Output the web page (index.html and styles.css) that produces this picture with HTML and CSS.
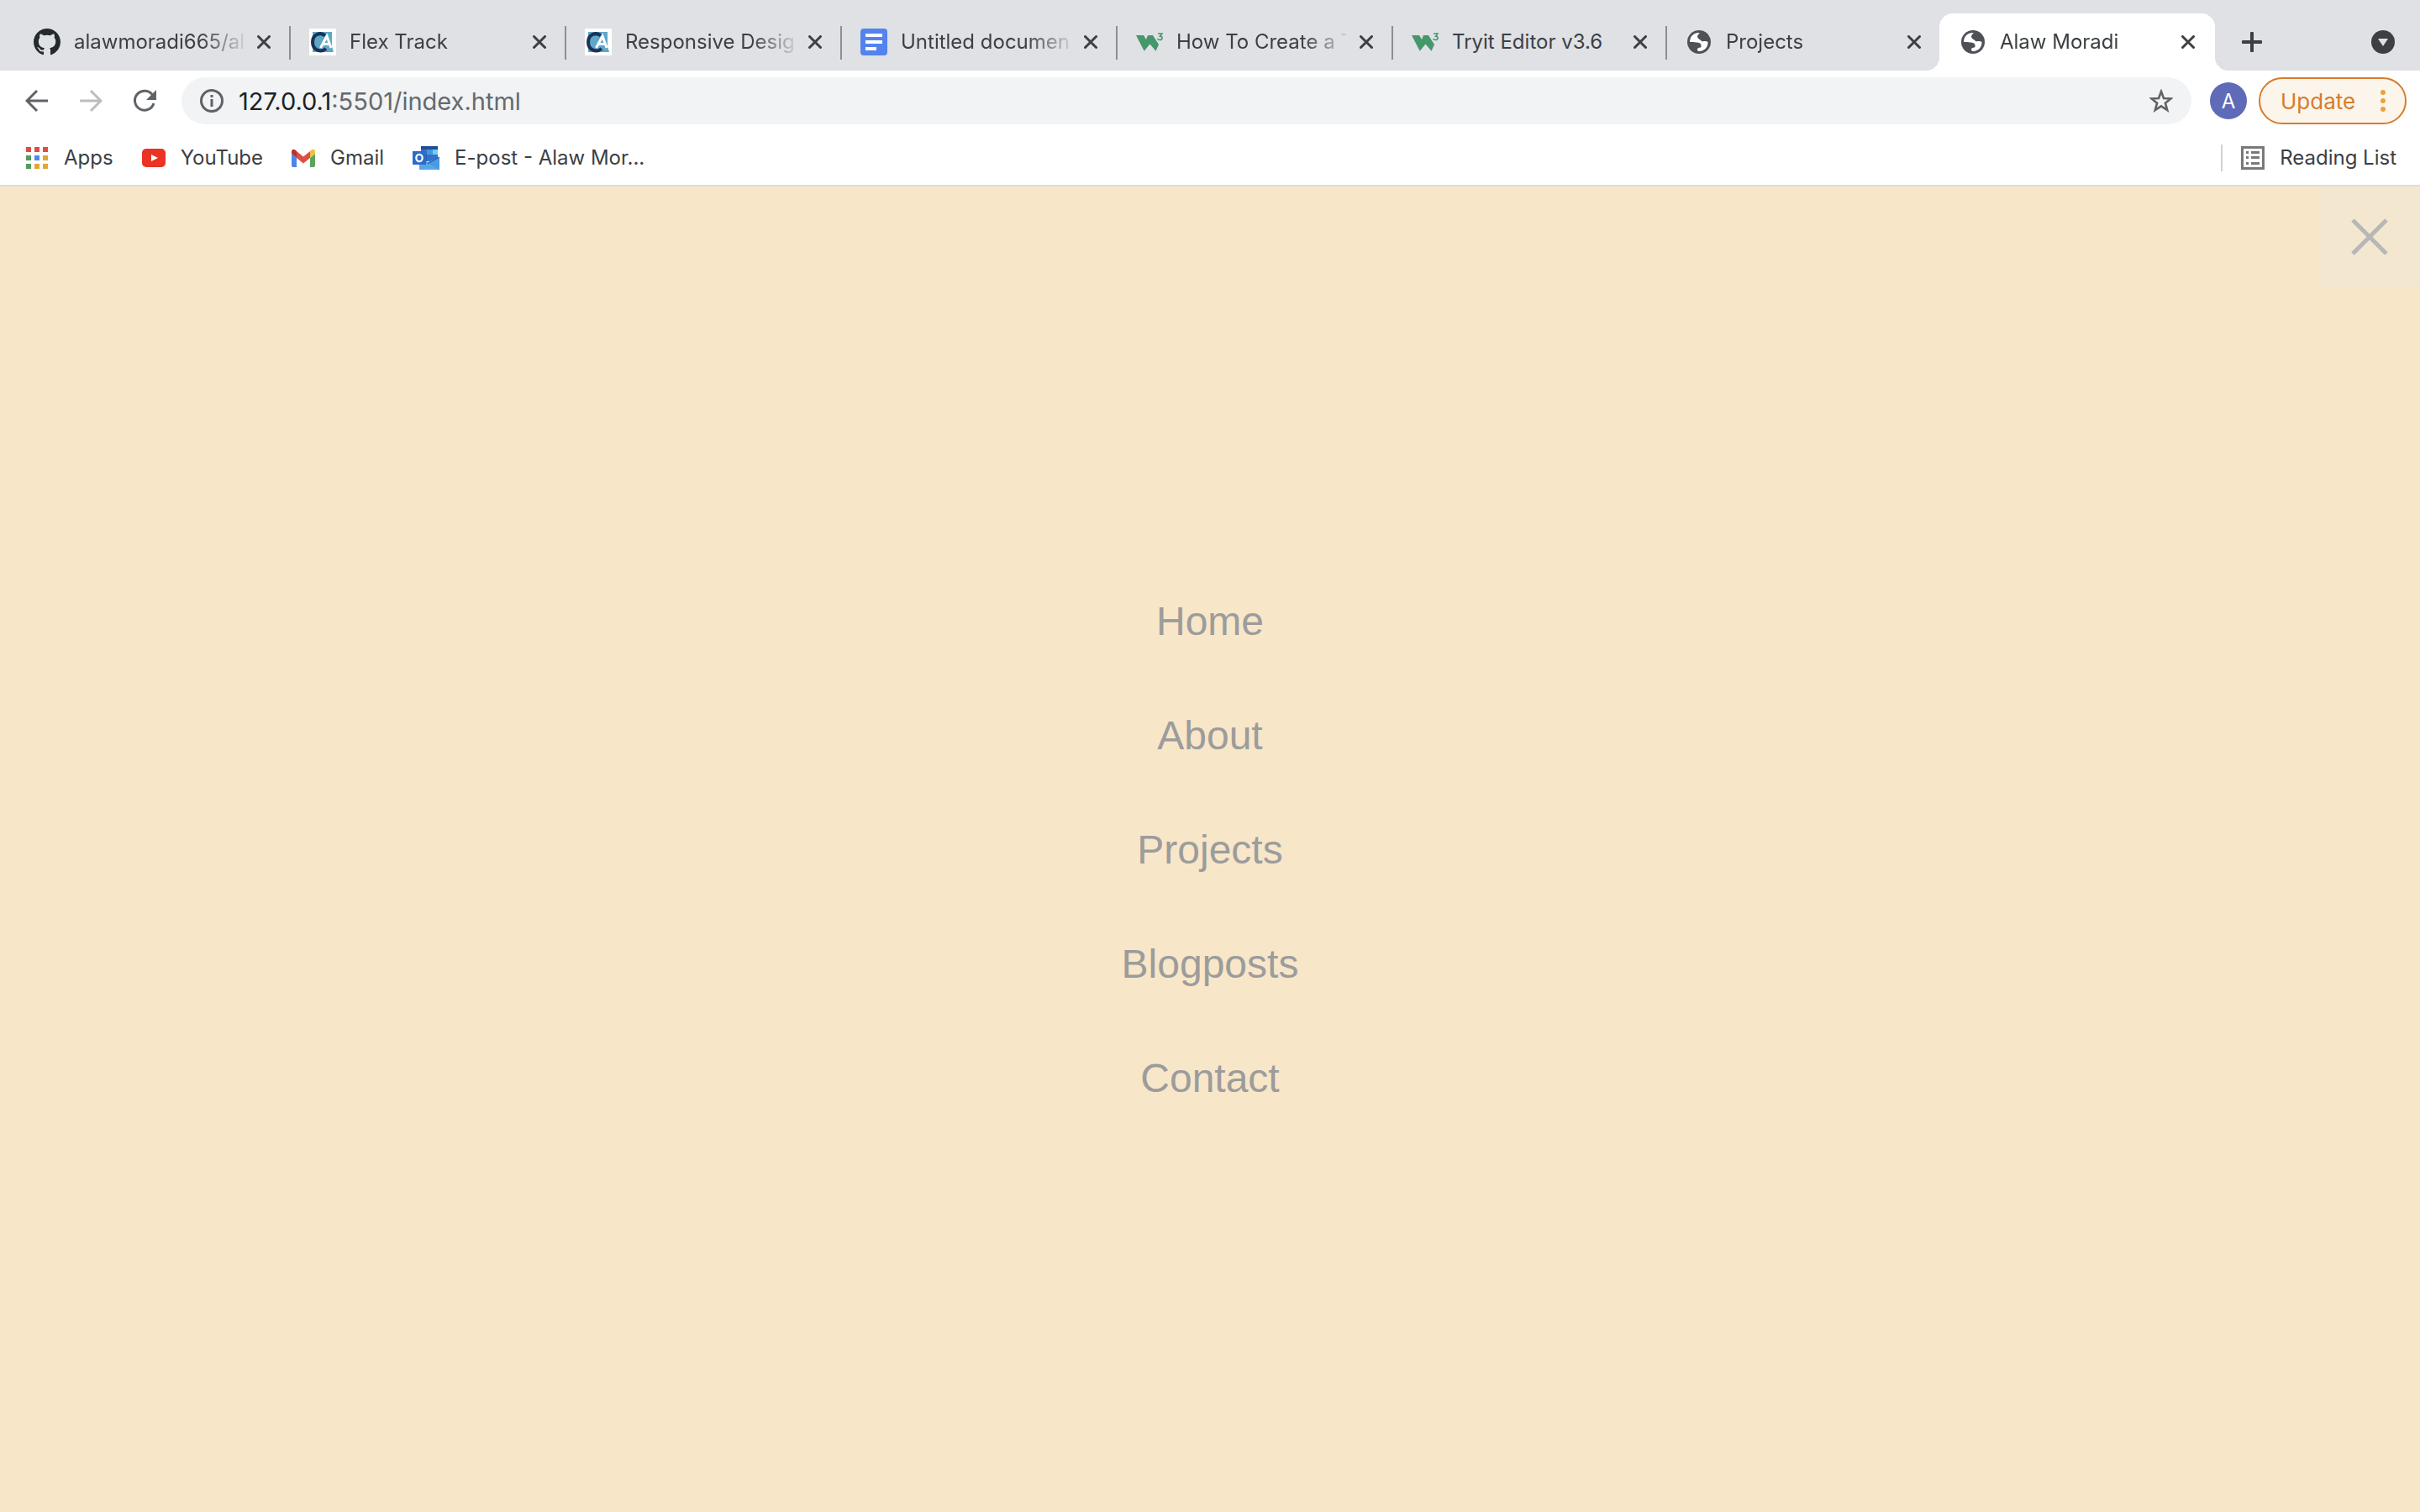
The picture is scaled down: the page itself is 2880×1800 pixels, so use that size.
FILE: index.html
```html
<!DOCTYPE html>
<html lang="en">
<head>
<meta charset="utf-8">
<title>Alaw Moradi</title>
<link rel="stylesheet" href="styles.css">
</head>
<body>
<svg class="defs" aria-hidden="true">
  <symbol id="close" viewBox="0 0 16 16"><path d="M1.5 1.5l13 13M14.5 1.5l-13 13" fill="none" stroke="#3c4043" stroke-width="3" stroke-linecap="round"/></symbol>
  <symbol id="globe" viewBox="0 0 32 32"><circle cx="16" cy="16" r="14" fill="#505157"/><path d="M5 16C5 9 10 4.500 17 5C15 7 14 8 14 10C15 13 18 13 19 15C21 16 24 14 26.500 16C27 22 22 27.500 15.500 27C13 26 14 24 15 23C18 23 19 22 18.500 20C18 17 16 17 13 16.500C10 16 8 16 5 16Z" fill="#fff" class="land"/></symbol>
  <symbol id="academy" viewBox="0 0 32 32"><path fill="#fff" d="M0 0h32v32H0z"/><path fill="#5ea7c6" d="M4 4h23v17l2 7H4z"/><path d="M19 8.500C14 4 4 6 4 16S14 29 20 24" fill="none" stroke="#1c3257" stroke-width="4"/><path d="M13.500 23L21 9l5 14M17 18.500h7" fill="none" stroke="#fff" stroke-width="3"/></symbol>
  <symbol id="w3" viewBox="0 0 32 32"><path d="M0 8h9l3 5 2-5h6l7 11-3.500 7.700L16.500 18.500 9.700 26.700z" fill="#44986a"/><path d="M26 6h5l-2.500 3.200c4 0 3 4.300 0 4.300-1.500 0-2.500-.5-3-1.500" fill="none" stroke="#44986a" stroke-width="1.500"/></symbol>
</svg>
<header class="browser">
  <nav class="tabs" aria-label="Tabs">
    <div class="tab">
      <svg class="favicon" viewBox="0 0 16 16"><path fill="#24292e" d="M8 0C3.580 0 0 3.580 0 8c0 3.540 2.290 6.530 5.470 7.590.4.070.55-.17.55-.38 0-.19-.01-.82-.01-1.490-2.010.37-2.530-.49-2.690-.94-.09-.23-.48-.94-.82-1.130-.28-.15-.68-.52-.01-.53.63-.01 1.080.58 1.230.82.72 1.210 1.870.87 2.330.66.07-.52.28-.87.51-1.070-1.780-.2-3.640-.89-3.640-3.950 0-.87.31-1.590.82-2.150-.08-.2-.36-1.020.08-2.120 0 0 .67-.21 2.200.82.64-.18 1.320-.27 2-.27s1.360.09 2 .27c1.530-1.040 2.200-.82 2.200-.82.44 1.100.16 1.920.08 2.120.51.56.82 1.270.82 2.150 0 3.070-1.870 3.750-3.650 3.950.29.25.54.73.54 1.480 0 1.070-.01 1.930-.01 2.200 0 .21.15.46.55.38A8.010 8.010 0 0 0 16 8c0-4.420-3.580-8-8-8z"/></svg>
      <span class="title">alawmoradi665/al</span>
      <button class="close" aria-label="Close tab"><svg><use href="#close"/></svg></button>
    </div>
    <div class="tab">
      <svg class="favicon"><use href="#academy"/></svg>
      <span class="title">Flex Track</span>
      <button class="close" aria-label="Close tab"><svg><use href="#close"/></svg></button>
    </div>
    <div class="tab">
      <svg class="favicon"><use href="#academy"/></svg>
      <span class="title">Responsive Desig</span>
      <button class="close" aria-label="Close tab"><svg><use href="#close"/></svg></button>
    </div>
    <div class="tab">
      <svg class="favicon" viewBox="0 0 32 32"><rect width="32" height="32" rx="4" fill="#5383ec"/><path fill="#fff" d="M6 6h20v4H6zM6 14h20v4H6zM6 22h13v4H6z"/></svg>
      <span class="title">Untitled documen</span>
      <button class="close" aria-label="Close tab"><svg><use href="#close"/></svg></button>
    </div>
    <div class="tab">
      <svg class="favicon"><use href="#w3"/></svg>
      <span class="title">How To Create a T</span>
      <button class="close" aria-label="Close tab"><svg><use href="#close"/></svg></button>
    </div>
    <div class="tab narrow">
      <svg class="favicon"><use href="#w3"/></svg>
      <span class="title whole">Tryit Editor v3.6</span>
      <button class="close" aria-label="Close tab"><svg><use href="#close"/></svg></button>
    </div>
    <div class="tab narrow last">
      <svg class="favicon"><use href="#globe"/></svg>
      <span class="title">Projects</span>
      <button class="close" aria-label="Close tab"><svg><use href="#close"/></svg></button>
    </div>
    <div class="tab active">
      <svg class="favicon"><use href="#globe"/></svg>
      <span class="title">Alaw Moradi</span>
      <button class="close" aria-label="Close tab"><svg><use href="#close"/></svg></button>
    </div>
    <button class="new-tab" aria-label="New tab"><svg viewBox="0 0 24 24"><path d="M12 1.500v21M1.500 12h21" stroke="#3c4043" stroke-width="4" stroke-linecap="round"/></svg></button>
    <button class="tab-search" aria-label="Search tabs"><svg viewBox="0 0 28 28"><circle cx="14" cy="14" r="14" fill="#3c4043"/><path d="M8 10h12l-6 9z" fill="#dfe1e5"/></svg></button>
  </nav>

  <div class="toolbar">
    <div class="controls">
      <button aria-label="Back"><svg viewBox="0 0 28 28"><path d="M27 14H3M14 2L2 14l12 12" fill="none" stroke="#5f6368" stroke-width="3"/></svg></button>
      <button aria-label="Forward"><svg viewBox="0 0 28 28"><path d="M1 14h24M14 2l12 12-12 12" fill="none" stroke="#bbbdbf" stroke-width="3"/></svg></button>
      <button aria-label="Reload"><svg viewBox="0 0 28 28"><path d="M24 8A11.500 11.500 0 1 0 25 17" fill="none" stroke="#5f6368" stroke-width="3"/><path d="M28 1v12H16z" fill="#5f6368"/></svg></button>
    </div>
    <div class="omnibox">
      <svg viewBox="0 0 28 28"><circle cx="14" cy="14" r="12.500" fill="none" stroke="#5f6368" stroke-width="3"/><path d="M12.500 7h3v3h-3zM12.500 12h3v9h-3z" fill="#5f6368"/></svg>
      <p class="url"><span class="host">127.0.0.1</span>:5501/index.html</p>
      <button aria-label="Bookmark this page"><svg viewBox="0 0 28 28"><path d="M14 3l3 8 8.500.4-6.600 5.300 2.300 8.300-7.200-4.700L6.800 25l2.300-8.300-6.600-5.300L11 11z" fill="none" stroke="#5f6368" stroke-width="2.600"/></svg></button>
    </div>
    <button class="avatar">A</button>
    <button class="update">Update<svg viewBox="0 0 6 26"><g fill="#e8a33d"><circle cx="3" cy="3" r="3"/><circle cx="3" cy="13" r="3"/><circle cx="3" cy="23" r="3"/></g></svg></button>
  </div>

  <nav class="bookmarks" aria-label="Bookmarks">
    <a href="#apps"><svg viewBox="0 0 28 28"><path fill="#e14c3f" d="M1 1h6v6H1zM11 1h6v6h-6zM21 1h6v6h-6z"/><path fill="#549b5f" d="M1 11h6v6H1zM1 21h6v6H1z"/><path fill="#4a89f3" d="M11 11h6v6h-6z"/><path fill="#e3a535" d="M21 11h6v6h-6zM11 21h6v6h-6zM21 21h6v6h-6z"/></svg>Apps</a>
    <a href="#youtube"><svg viewBox="0 0 28 28"><rect y="3" width="28" height="22" rx="5" fill="#ea3323"/><path fill="#fff" d="M11 10l8 4-8 4z"/></svg>YouTube</a>
    <a href="#gmail"><svg viewBox="0 0 28 28"><path fill="#4f84ed" d="M0 9l6 5v11H2q-2 0-2-2z"/><path fill="#58a55c" d="M28 9l-6 5v11h4q2 0 2-2z"/><path fill="#dc5044" d="M6 6l8 6.500L22 6v8l-8 6.500L6 14z"/><path fill="#b7342a" d="M0 9V7c0-4 3-4.500 6-1v8z"/><path fill="#f2bf42" d="M28 9V7c0-4-3-4.500-6-1v8z"/></svg>Gmail</a>
    <a href="#mail"><svg class="outlook" viewBox="0 0 32 28"><path fill="#3173c9" d="M10 0h20v18H10z"/><path fill="#234e96" d="M10 0h20v4H10z"/><path fill="#4398e0" d="M17 4h7v6h-7z"/><path fill="#70cdf8" d="M24 4h6v6h-6z"/><path fill="#2b62b4" d="M10 10h7v8h-7z"/><path fill="#4a9ae3" d="M32 13v15H8V14l10 5z"/><path fill="#56a9e8" d="M8 28h24L14 18H8z"/><path d="M32 13l-14 8" stroke="#245199"/><path fill="#2d6cc7" d="M0 6h16v16H0z"/><ellipse cx="8" cy="14" rx="3.700" ry="4.200" fill="none" stroke="#fff" stroke-width="2.200"/></svg>E-post - Alaw Mor...</a>
    <a class="reading" href="#reading"><svg viewBox="0 0 28 28"><path d="M1.500 1.500h25v25h-25z" fill="none" stroke="#77797b" stroke-width="3"/><path fill="#77797b" d="M6 6h3v3H6zM12 6h10v3H12zM6 12h3v3H6zM12 12h10v3H12zM6 19h3v3H6zM12 19h10v3H12z"/></svg>Reading List</a>
  </nav>
</header>

<main class="overlay">
  <button class="dismiss" aria-label="Close menu"><svg viewBox="0 0 44 44"><path d="M2 2l40 40M42 2L2 42" stroke="#b7b7b7" stroke-width="5"/></svg></button>
  <nav class="menu" aria-label="Main">
    <a href="#home">Home</a>
    <a href="#about">About</a>
    <a href="#projects">Projects</a>
    <a href="#blogposts">Blogposts</a>
    <a href="#contact">Contact</a>
  </nav>
</main>
</body>
</html>
```
FILE: styles.css
```css
* { box-sizing: border-box; }
body {
  margin: 0;
  min-height: 100vh;
  display: flex;
  flex-direction: column;
  font-family: Inter, "Liberation Sans", sans-serif;
  font-size: 24px;
  color: #3c4043;
}
button {
  padding: 0;
  border: 0;
  background: none;
  font: inherit;
  color: inherit;
}
a { color: inherit; text-decoration: none; }
svg { display: block; flex: none; }
.defs { display: none; }

.browser { background: #fff; border-bottom: 2px solid #dadce0; }

/* Tab strip */
.tabs {
  display: flex;
  height: 84px;
  padding: 16px 30px 0 18px;
  background: #dfe1e5;
}
.tab {
  flex: 0 1 328px;
  min-width: 0;
  display: flex;
  align-items: center;
  gap: 16px;
  padding: 0 24px 0 22px;
  background: linear-gradient(#8c8e92, #8c8e92) right 15px / 2px 40px no-repeat;
}
.tab.narrow { flex-basis: 326px; }
.tab.last { background: none; }
.favicon { width: 32px; height: 32px; }
.title {
  flex: 1;
  min-width: 0;
  overflow: hidden;
  white-space: nowrap;
  line-height: 32px;
  mask-image: linear-gradient(to right, #000 calc(100% - 52px), rgb(0 0 0 / 12%));
}
.title.whole { mask-image: none; }
.close svg { width: 16px; height: 16px; }
.tab.active {
  position: relative;
  margin-left: -2px;
  padding-left: 24px;
  background: #fff;
  border-radius: 16px 16px 0 0;
}
.active::before,
.active::after {
  content: "";
  position: absolute;
  bottom: 0;
  width: 16px;
  height: 16px;
}
.active::before { right: 100%; background: radial-gradient(circle at 0 0, transparent 16px, #fff 16px); }
.active::after { left: 100%; background: radial-gradient(circle at 100% 0, transparent 16px, #fff 16px); }
.new-tab { margin-left: 32px; }
.new-tab svg { width: 24px; height: 24px; }
.tab-search { margin-left: auto; }
.tab-search svg { width: 28px; height: 28px; }

/* Address bar */
.toolbar {
  display: flex;
  align-items: center;
  height: 72px;
  padding: 0 16px 0 30px;
}
.controls { display: flex; gap: 36px; margin-right: 30px; }
.toolbar svg { width: 28px; height: 28px; }
.omnibox {
  flex: 1;
  display: flex;
  align-items: center;
  height: 56px;
  padding: 0 22px;
  border-radius: 28px;
  background: #f1f3f4;
}
.url { flex: 1; margin: 0 0 0 18px; color: #66696d; font-size: 29px; }
.host { color: #202124; }
.avatar {
  width: 44px;
  height: 44px;
  margin: 0 14px 0 22px;
  border-radius: 50%;
  background: #5f6ab9;
  color: #fff;
}
.update {
  display: flex;
  align-items: center;
  justify-content: space-between;
  width: 176px;
  height: 56px;
  padding: 0 23px 0 24px;
  border: 2px solid #d67c2d;
  border-radius: 28px;
  background: #fcf5eb;
  color: #d67c2d;
  font-size: 26px;
}
.toolbar .update svg { width: 6px; height: 26px; }

/* Bookmarks */
.bookmarks {
  display: flex;
  align-items: center;
  gap: 34px;
  height: 64px;
  padding: 0 28px 0 30px;
}
.bookmarks a { display: flex; align-items: center; gap: 18px; line-height: 32px; white-space: nowrap; }
.bookmarks svg { width: 28px; height: 28px; }
.bookmarks .outlook { width: 32px; }
.bookmarks .reading { margin-left: auto; padding-left: 22px; border-left: 2px solid #cfd1d4; }

/* Full-screen menu */
.overlay {
  position: relative;
  flex: 1;
  display: grid;
  place-items: center;
  padding-top: 2px;
  background: #f7e6c8;
}
.dismiss {
  position: absolute;
  top: 0;
  right: 0;
  width: 120px;
  height: 120px;
  display: grid;
  place-items: center;
  background: #f4e7cf;
}
.dismiss svg { width: 44px; height: 44px; }
.menu {
  display: flex;
  flex-direction: column;
  text-align: center;
  font-family: "Liberation Sans", Arial, sans-serif;
  font-size: 48px;
  line-height: 136px;
  color: #9c9c9c;
}
```
